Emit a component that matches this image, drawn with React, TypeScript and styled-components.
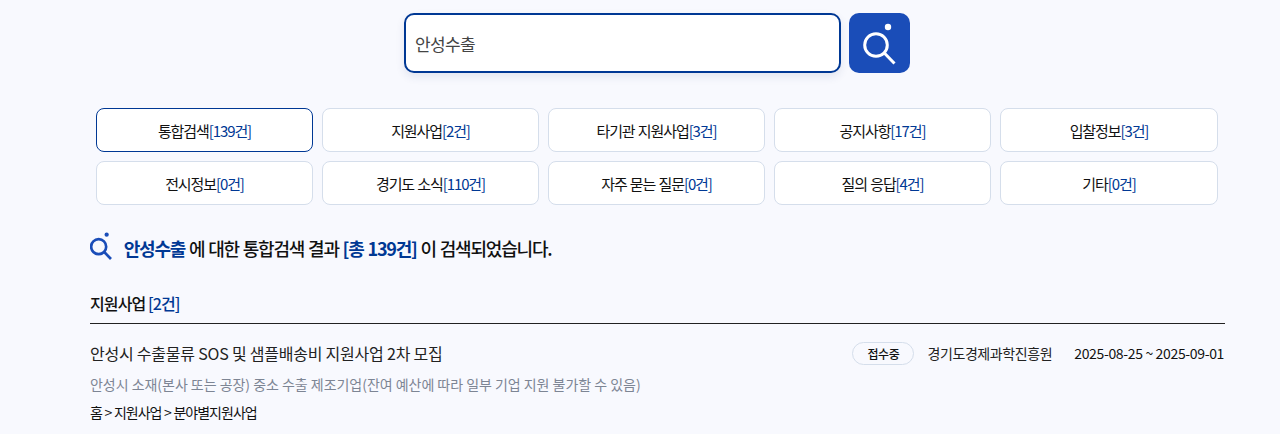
import React from "react";
import styled, { createGlobalStyle } from "styled-components";

const GlobalStyle = createGlobalStyle`
  html, body { margin: 0; padding: 0; background: #f8f9fe; }
  body {
    font-family: "Noto Sans CJK KR", "Noto Sans", sans-serif;
    color: #111;
    height: 434px;
    overflow: hidden;
  }
  * { box-sizing: border-box; }
`;

const Page = styled.div`
  width: 1280px;
  height: 434px;
  overflow: hidden;
  padding-top: 13px;
`;

const SearchRow = styled.form`
  display: flex;
  justify-content: center;
  gap: 8px;
  padding-left: 34px;
`;

const SearchInput = styled.input`
  width: 437px;
  height: 60px;
  border: 2px solid #003894;
  border-radius: 10px;
  background: #fff;
  padding: 0 9px;
  font: 400 17px "Noto Sans CJK KR", sans-serif;
  letter-spacing: -0.65px;
  color: #444;
  box-shadow: 0 4px 8px rgba(40, 60, 120, 0.1);
  outline: none;
`;

const SearchButton = styled.button`
  width: 61px;
  height: 60px;
  border: 0;
  border-radius: 10px;
  padding: 2px 0 0;
  background: #1a4db8;
  display: flex;
  align-items: center;
  justify-content: center;
`;

const Tabs = styled.div`
  display: grid;
  grid-template-columns: repeat(4, 217px) 218px;
  grid-auto-rows: 44px;
  gap: 9px;
  margin: 35px 0 0 96px;
`;

const Tab = styled.div<{ $active?: boolean }>`
  display: flex;
  align-items: center;
  justify-content: center;
  background: #fff;
  border: 1px solid ${(p) => (p.$active ? "#003894" : "#d5deeb")};
  border-radius: 8px;
  font-size: 15px;
  letter-spacing: -1.1px;
  word-spacing: 1px;
  color: #111;
  white-space: pre;
`;

const Count = styled.span`
  color: #003894;
`;

const Content = styled.div`
  width: 1135px;
  margin: 0 0 0 90px;
`;

const Summary = styled.div`
  display: flex;
  align-items: center;
  gap: 11px;
  margin-top: 26px;
  height: 34px;
  font-size: 18px;
  font-weight: 500;
  letter-spacing: -1.2px;
  word-spacing: 1px;
`;

const SummaryIcon = styled.span`
  display: flex;
  margin-bottom: 4px;
`;

const Strong = styled.span`
  color: #003894;
  font-weight: 700;
`;

const SectionHead = styled.div`
  margin-top: 27px;
  height: 32px;
  border-bottom: 1px solid #222;
  font-size: 16px;
  font-weight: 500;
  letter-spacing: -0.9px;
  line-height: 22px;
`;

const ItemTop = styled.div`
  display: flex;
  align-items: center;
  margin-top: 17px;
  height: 24px;
  padding-right: 1px;
`;

const ItemTitle = styled.div`
  flex: 1;
  font-size: 16px;
  letter-spacing: -0.22px;
  color: #222;
`;

const Badge = styled.span`
  width: 62px;
  height: 23px;
  display: flex;
  align-items: center;
  justify-content: center;
  border: 1px solid #d5deeb;
  border-radius: 12px;
  font-size: 12px;
  font-weight: 500;
  letter-spacing: -0.4px;
`;

const Org = styled.span`
  margin-left: 13px;
  font-size: 14px;
  letter-spacing: -0.4px;
  color: #222;
`;

const Dates = styled.span`
  margin-left: 22px;
  font-size: 14px;
  letter-spacing: -0.35px;
  color: #111;
`;

const Desc = styled.div`
  margin-top: 8px;
  font-size: 14px;
  line-height: 22px;
  letter-spacing: -0.03px;
  color: #7d8594;
`;

const Crumb = styled.div`
  margin-top: 7px;
  font-size: 14px;
  line-height: 20px;
  letter-spacing: -1px;
  word-spacing: 0.5px;
  color: #111;
`;

const tabs = [
  ["통합검색", "[139건]"],
  ["지원사업", "[2건]"],
  ["타기관 지원사업", "[3건]"],
  ["공지사항", "[17건]"],
  ["입찰정보", "[3건]"],
  ["전시정보", "[0건]"],
  ["경기도 소식", "[110건]"],
  ["자주 묻는 질문", "[0건]"],
  ["질의 응답", "[4건]"],
  ["기타", "[0건]"],
];

function SearchIcon({ color, height, stroke }: { color: string; height: number; stroke: number }) {
  return (
    <svg width={(height * 34) / 42} height={height} viewBox="0 0 34 42" fill="none">
      <circle cx="13" cy="22" r="11.3" stroke={color} strokeWidth={stroke} />
      <path d="M21.3 30L31.5 40.5" stroke={color} strokeWidth={stroke} />
      <circle cx="25" cy="4" r="3.2" fill={color} />
    </svg>
  );
}

export default function App() {
  return (
    <Page>
      <GlobalStyle />
      <SearchRow>
        <SearchInput defaultValue="안성수출" />
        <SearchButton type="button">
          <SearchIcon color="#fff" height={42} stroke={3} />
        </SearchButton>
      </SearchRow>
      <Tabs>
        {tabs.map(([name, count], i) => (
          <Tab key={name} $active={i === 0}>
            {name}
            <Count>{count}</Count>
          </Tab>
        ))}
      </Tabs>
      <Content>
        <Summary>
          <SummaryIcon>
            <SearchIcon color="#1a4db8" height={28} stroke={4} />
          </SummaryIcon>
          <div>
            <Strong>안성수출</Strong> 에 대한 통합검색 결과 <Strong>[총 139건]</Strong> 이 검색되었습니다.
          </div>
        </Summary>
        <SectionHead>
          지원사업 <Count>[2건]</Count>
        </SectionHead>
        <ItemTop>
          <ItemTitle>안성시 수출물류 SOS 및 샘플배송비 지원사업 2차 모집</ItemTitle>
          <Badge>접수중</Badge>
          <Org>경기도경제과학진흥원</Org>
          <Dates>2025-08-25 ~ 2025-09-01</Dates>
        </ItemTop>
        <Desc>안성시 소재(본사 또는 공장) 중소 수출 제조기업(잔여 예산에 따라 일부 기업 지원 불가할 수 있음)</Desc>
        <Crumb>홈 &gt; 지원사업 &gt; 분야별지원사업</Crumb>
      </Content>
    </Page>
  );
}
